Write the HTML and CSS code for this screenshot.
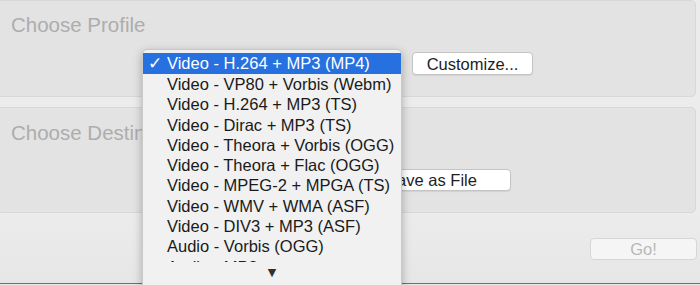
FILE: index.html
```html
<!DOCTYPE html>
<html>
<head>
<meta charset="utf-8">
<link rel="stylesheet" href="styles.css">
</head>
<body>
<div class="window">
  <section class="panel panel-profile">
    <div class="panel-title">Choose Profile</div>
    <div class="panel-row row-profile">
      <div class="popup"></div>
      <button class="btn">Customize...</button>
    </div>
  </section>
  <section class="panel panel-dest">
    <div class="panel-title">Choose Destination</div>
    <div class="panel-row row-dest">
      <button class="btn btn-save">Save as File</button>
    </div>
  </section>
  <div class="footer">
    <button class="btn btn-go">Go!</button>
  </div>
</div>
<div class="menu">
  <div class="menu-item selected"><span class="check">✓</span>Video - H.264 + MP3 (MP4)</div>
  <div class="menu-item">Video - VP80 + Vorbis (Webm)</div>
  <div class="menu-item">Video - H.264 + MP3 (TS)</div>
  <div class="menu-item">Video - Dirac + MP3 (TS)</div>
  <div class="menu-item">Video - Theora + Vorbis (OGG)</div>
  <div class="menu-item">Video - Theora + Flac (OGG)</div>
  <div class="menu-item">Video - MPEG-2 + MPGA (TS)</div>
  <div class="menu-item">Video - WMV + WMA (ASF)</div>
  <div class="menu-item">Video - DIV3 + MP3 (ASF)</div>
  <div class="menu-item">Audio - Vorbis (OGG)</div>
  <div class="menu-item">Audio - MP3</div>
  <div class="menu-scroll">▼</div>
</div>
</body>
</html>
```
FILE: styles.css
```css
html, body {
  margin: 0;
  padding: 0;
  width: 700px;
  height: 285px;
  overflow: hidden;
  background: #ececec;
  font-family: "Liberation Sans", Arial, sans-serif;
}
.window {
  position: relative;
  height: 283px;
  border-bottom: 1px solid #6e6e6e;
  display: flex;
  flex-direction: column;
  background: linear-gradient(#ececec 75%, #e6e6e6);
}
.panel {
  margin: 0 4px 0 -4px;
  background: #e3e3e3;
  border: 1px solid #d8d8d8;
  border-radius: 5px;
  box-sizing: border-box;
}
.panel-profile {
  height: 97px;
  margin-top: 0;
}
.panel-dest {
  height: 106px;
  margin-top: 10px;
}
.panel-title {
  font-size: 20.5px;
  line-height: 24px;
  color: #adadad;
  padding-left: 14px;
}
.panel-profile .panel-title { padding-top: 12px; }
.panel-dest .panel-title { padding-top: 13px; }
.panel-row {
  display: flex;
  align-items: center;
  gap: 10px;
}
.row-profile {
  margin-top: 15px;
  padding-left: 146px;
}
.popup {
  width: 259px;
  height: 23px;
}
.row-dest {
  margin-top: 24px;
  padding-left: 355px;
}
.btn {
  font-family: "Liberation Sans", Arial, sans-serif;
  font-size: 16.5px;
  color: #1e1e1e;
  background: #ffffff;
  border: 1px solid #c4c4c4;
  border-radius: 4px;
  box-shadow: 0 1px 1px rgba(0,0,0,0.08);
  height: 23px;
  padding: 0;
  box-sizing: border-box;
  line-height: 20px;
}
.row-profile .btn { width: 121px; }
.btn-save { width: 159px; height: 22px; }
.footer {
  display: flex;
  justify-content: flex-end;
  padding-top: 25px;
  padding-right: 3px;
}
.btn-go {
  width: 107px;
  height: 22px;
  background: #f5f5f5;
  border-color: #d6d6d6;
  color: #b8b8b8;
  box-shadow: none;
}
.menu {
  position: absolute;
  left: 142px;
  top: 49px;
  width: 260px;
  height: 245px;
  box-sizing: border-box;
  padding-top: 3px;
  background: #f1f1f1;
  border: 1px solid #c9c9c9;
  border-radius: 5px;
  box-shadow: 0 3px 10px rgba(0,0,0,0.28);
  overflow: hidden;
}
.menu-item {
  position: relative;
  height: 20.3px;
  line-height: 20.3px;
  padding-left: 24px;
  font-size: 16.5px;
  color: #1a1a1a;
  white-space: nowrap;
}
.menu-item.selected {
  background: #2670e0;
  color: #ffffff;
  height: 21px;
  line-height: 21px;
}
.check {
  position: absolute;
  left: 5px;
  top: 0;
  font-family: "DejaVu Sans", sans-serif;
  font-size: 17px;
  font-weight: bold;
}
.menu-scroll {
  position: absolute;
  left: 0;
  right: 0;
  top: 212px;
  height: 40px;
  background: #f1f1f1;
  text-align: center;
  font-family: "DejaVu Sans", sans-serif;
  font-size: 11px;
  line-height: 16px;
  color: #303030;
  padding-top: 3px;
}
```
